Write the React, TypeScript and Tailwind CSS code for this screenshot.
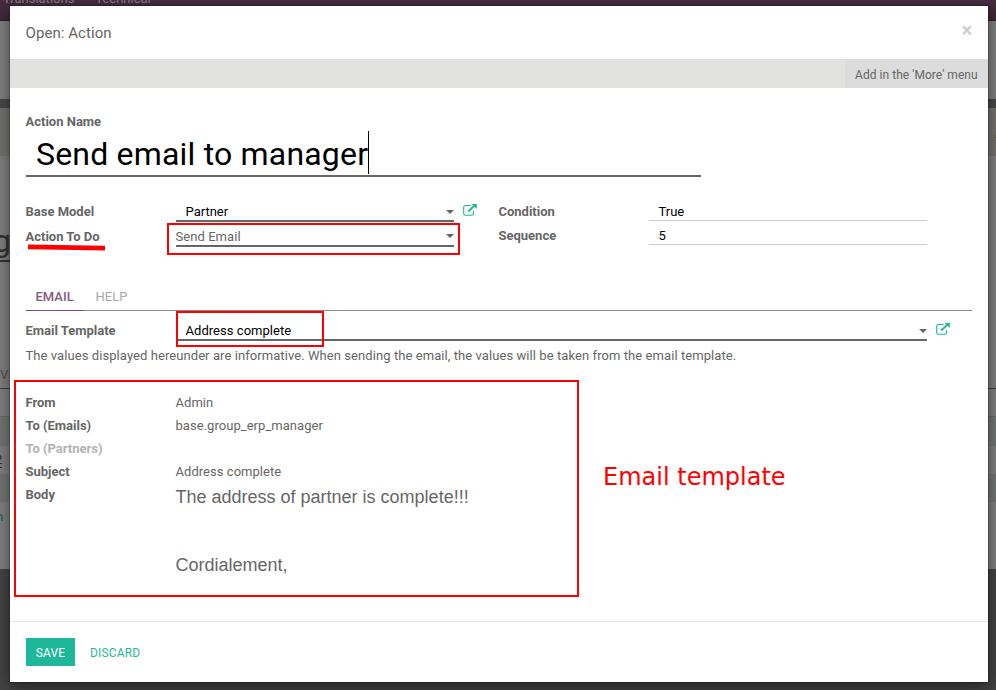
import type { ReactNode } from "react";

function Caret() {
  return (
    <svg width="8" height="4" viewBox="0 0 8 4" className="shrink-0">
      <path d="M0 0H8L4 4Z" fill="#666" />
    </svg>
  );
}

function ExternalLink() {
  return (
    <svg width="14" height="12" viewBox="0 0 14 12" className="shrink-0" fill="none">
      <path d="M7.5 1.5H2.5Q0.7 1.5 0.7 3.2V9.5Q0.7 11.3 2.5 11.3H8.8Q10.5 11.3 10.5 9.5V7" stroke="#1fb799" strokeWidth="1.1" />
      <path d="M5.2 7.5L11.3 1.8" stroke="#1fb799" strokeWidth="1.9" />
      <path d="M8.7 0H13.8V5Z" fill="#1fb799" />
    </svg>
  );
}

function Label({ children, muted = false }: { children: ReactNode; muted?: boolean }) {
  return (
    <div className={`-ml-[0.5px] w-[150px] shrink-0 font-bold tracking-[-0.01px] ${muted ? "text-[#b2b2b2]" : "text-[#666]"}`}>
      {children}
    </div>
  );
}

function InfoRow({ label, value, muted }: { label: string; value?: string; muted?: boolean }) {
  return (
    <div className="flex h-[23px] items-center">
      <Label muted={muted}>{label}</Label>
      <div className="tracking-[0.04px]">{value}</div>
    </div>
  );
}

function Backdrop() {
  return (
    <div className="absolute inset-0 flex flex-col overflow-hidden bg-[#434343] text-[13px]">
      <div className="flex h-[21px] shrink-0 gap-[21px] border-b border-[#2e1d29] bg-linear-to-b from-[#472c3f] to-[#3f2738] pl-[3px] leading-none text-[#8b7f88]">
        <span className="-mt-[8px]">Translations</span>
        <span className="-mt-[8px]">Technical</span>
      </div>
      <div className="h-[78px] shrink-0 bg-[#7f7f7f]" />
      <div className="h-[9px] shrink-0 bg-[#484848]" />
      <div className="flex h-[48px] shrink-0 items-center justify-end bg-[#73726f] text-[#5c6130]">
        <span className="-mr-[7px] mt-[4px]">A</span>
      </div>
      <div className="flex h-[106px] shrink-0 items-end bg-[#7f7f7f] text-[32px] leading-[38px] text-[#333]">
        <span className="-ml-[7px] w-[120px] border-b-2 border-[#333]">g</span>
      </div>
      <div className="h-[127px] shrink-0 border-b border-[#404040] bg-[#7f7f7f] pt-[104px] leading-[18px] text-[#4d4d4d]">V</div>
      <div className="h-[28px] shrink-0 border-b border-[#6b6b6b] bg-[#7f7f7f]" />
      <div className="h-[29px] shrink-0 bg-[#737575]" />
      <div className="h-[28px] shrink-0 bg-[#7f7f7f] pt-[5px] text-[#333]"><span className="-ml-[5px] border-b border-[#333]">2</span></div>
      <div className="h-[28px] shrink-0 bg-[#737575]" />
      <div className="h-[67px] shrink-0 bg-[#7f7f7f] pt-[6px] text-[#0e6c5d]"><span className="-ml-[4px]">n</span></div>
    </div>
  );
}

export default function App() {
  return (
    <div className="relative h-[690px] w-[996px] overflow-hidden font-['Roboto',sans-serif] text-[13px] leading-[18px] text-[#666]">
      <Backdrop />
      <div className="relative ml-[10px] mt-[6px] flex h-[676px] w-[978px] flex-col bg-white shadow-[0_5px_15px_rgba(0,0,0,0.5),0_0_0_1px_rgba(0,0,0,0.2)]">
        <header className="flex h-[53px] shrink-0 items-center justify-between pl-[15.5px] pr-[16px] text-[15px]">
          <h4 className="tracking-[0.07px]">Open: Action</h4>
          <button className="mb-[4px] text-[19.5px] font-bold leading-none text-[#ccc]">×</button>
        </header>
        <div className="flex h-[29px] shrink-0 justify-end border-t border-[#dcdcdc] bg-[#e1e1df]">
          <button className="w-[143px] bg-[#dcdcdc] pl-[10px] pt-[2px] text-left text-[12px] tracking-[0.05px]">Add in the 'More' menu</button>
        </div>

        <main className="flex h-[534px] shrink-0 flex-col border-b border-[#e5e5e5] px-4">
          <div className="-ml-[0.5px] mt-[25px] h-[18px] font-bold">Action Name</div>
          <div className="flex h-[46px] w-[675px] shrink-0 border-b-2 border-[#666] pl-[10px] text-[32px] leading-[46px] tracking-[0.19px] text-black">
            Send email to manager
            <span className="h-[43px] w-px bg-black" />
          </div>

          <div className="mt-[25px] flex shrink-0">
            <div className="flex w-[473px] flex-col gap-[5px]">
              <div className="flex h-[20px] items-center">
                <Label>Base Model</Label>
                <div className="ml-[0.5px] flex h-[20px] w-[278px] items-center justify-between border-b-2 border-[#666] pl-[9.5px] text-black">
                  <span className="mt-[2px]">Partner</span>
                  <span className="mt-[2px] flex"><Caret /></span>
                </div>
                <span className="mb-[4px] ml-[9px]"><ExternalLink /></span>
              </div>
              <div className="flex h-[20px] items-center">
                <Label>Action To Do</Label>
                <div className="ml-[0.5px] flex h-[20px] w-[278px] items-center justify-between border-b-2 border-[#666]">
                  <span className="-ml-[0.5px] mt-[2px] tracking-[0.06px]">Send Email</span>
                  <Caret />
                </div>
              </div>
            </div>
            <div className="flex flex-col gap-[5px]">
              <div className="flex h-[19px] items-center">
                <Label>Condition</Label>
                <div className="ml-[0.5px] h-[19px] w-[278px] border-b border-[#ccc] pl-[9.5px] leading-[20px] text-black">True</div>
              </div>
              <div className="flex h-[19px] items-center">
                <Label>Sequence</Label>
                <div className="ml-[0.5px] h-[19px] w-[278px] border-b border-[#ccc] pl-[9.5px] leading-[20px] text-black">5</div>
              </div>
            </div>
          </div>

          <nav className="mt-[37px] flex h-[27px] shrink-0 border-b border-[#8c8c8c] leading-[25px]">
            <div className="h-[27px] w-[58px] border-b border-[#7c4c6c] pl-[9.5px] font-medium text-[#875a7b]">EMAIL</div>
            <div className="pl-[11.5px] text-[#a8a8a8]">HELP</div>
          </nav>
          <div className="mt-[9px] flex h-[21px] shrink-0 items-center">
            <Label>Email Template</Label>
            <div className="ml-[0.5px] flex h-[21px] w-[751px] items-center justify-between border-b-2 border-[#666] pl-[9.5px] text-black">
              <span className="mt-[2px] tracking-[0.04px]">Address complete</span>
              <span className="mt-[3px] flex"><Caret /></span>
            </div>
            <span className="mb-[3px] ml-[9px]"><ExternalLink /></span>
          </div>
          <p className="-ml-[0.5px] mt-[6px] shrink-0 tracking-[0.075px]">
            The values displayed hereunder are informative. When sending the email, the values will be taken from the email template.
          </p>

          <section className="mt-[26px] shrink-0">
            <InfoRow label="From" value="Admin" />
            <InfoRow label="To (Emails)" value="base.group_erp_manager" />
            <InfoRow label="To (Partners)" muted />
            <InfoRow label="Subject" value="Address complete" />
            <div className="flex">
              <div className="pt-[3px]"><Label>Body</Label></div>
              <div className="flex flex-col gap-[44px] pt-[2px] font-['Liberation_Sans',sans-serif] text-[18px] leading-[24px]">
                <p>The address of partner is complete!!!</p>
                <p>Cordialement,</p>
              </div>
            </div>
          </section>
        </main>

        <footer className="flex items-center gap-[15px] px-4 pt-[16px] text-[12px]">
          <button className="h-[28px] w-[49px] bg-[#1fb799] pt-[2px] tracking-[0.1px] text-white">SAVE</button>
          <button className="pt-[2px] tracking-[0.15px] text-[#1fb799]">DISCARD</button>
        </footer>
      </div>

      {/* Hand-drawn red annotations laid over the dialog */}
      <div className="absolute left-[167px] top-[223px] h-[32px] w-[293px] border-2 border-[#f00]" />
      <div className="absolute left-[176px] top-[311px] h-[36px] w-[148px] border-2 border-[#f00]" />
      <div className="absolute left-[14px] top-[380px] h-[217px] w-[565px] border-2 border-[#f00]" />
      <svg className="absolute left-[28px] top-[244px]" width="78" height="7" viewBox="0 0 78 7">
        <path d="M0 0.6L77 1.8V6.6L0 5.2Z" fill="#f00" />
      </svg>
      <div className="absolute left-[603px] top-[463px] whitespace-nowrap font-['DejaVu_Sans',sans-serif] text-[24px] leading-[28px] text-[#f00]">
        Email template
      </div>
    </div>
  );
}
